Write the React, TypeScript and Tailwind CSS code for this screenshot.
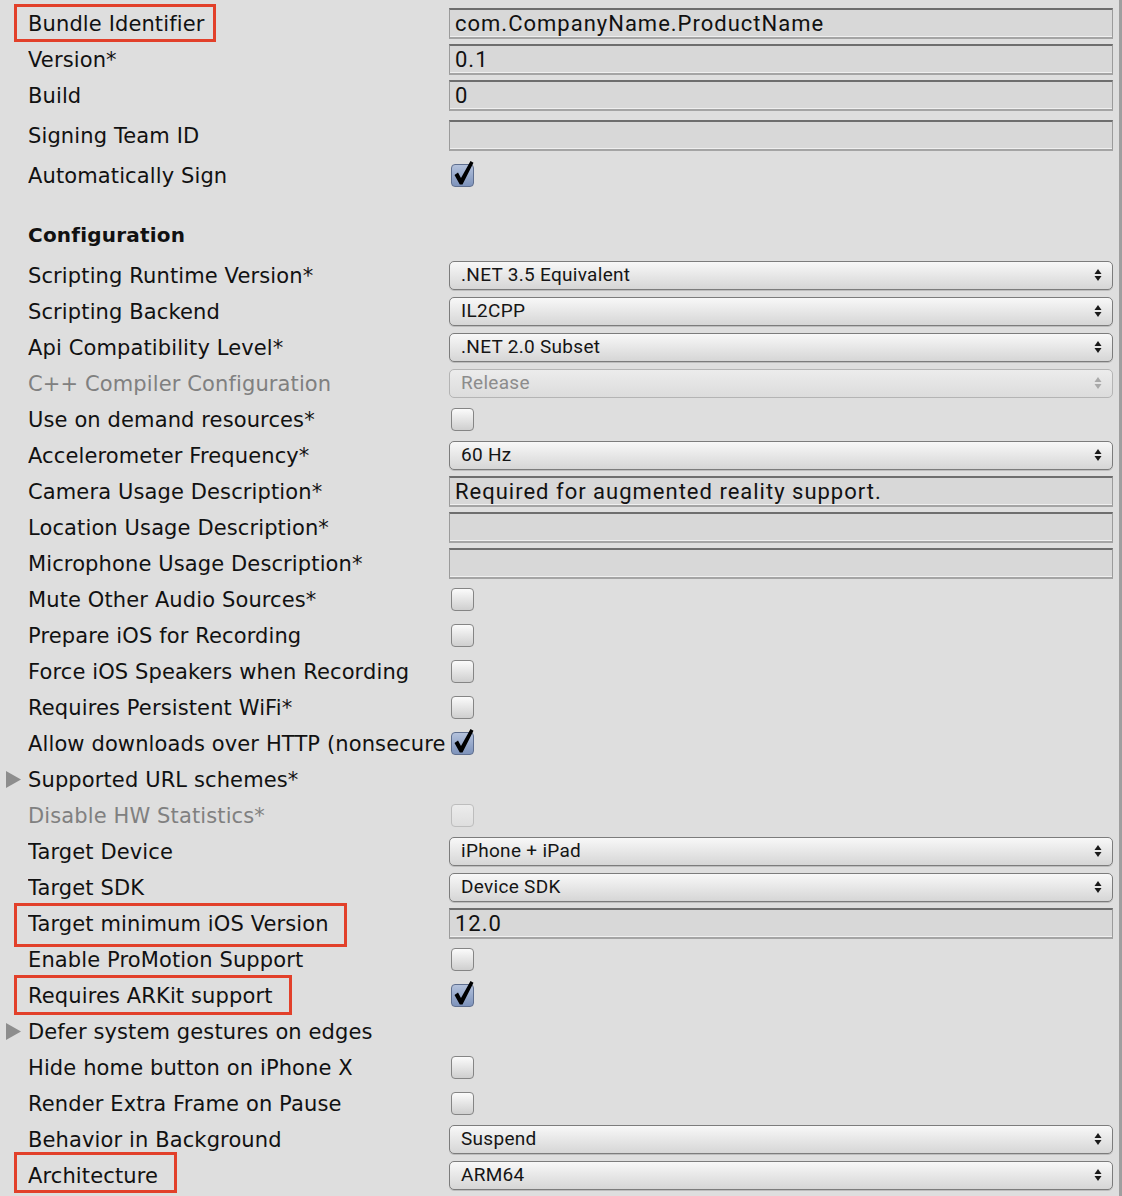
type Control =
  | { kind: "text"; value: string }
  | { kind: "select"; value: string; disabled?: boolean }
  | { kind: "check"; checked?: boolean; disabled?: boolean }
  | { kind: "none" };

interface Row {
  label: string;
  control: Control;
  dim?: boolean;
  foldout?: boolean;
  mark?: string; // classes for the red annotation box
}

const top: Row[] = [
  {
    label: "Bundle Identifier",
    control: { kind: "text", value: "com.CompanyName.ProductName" },
    mark: "top-[-1px] h-[38px] w-[202px]",
  },
  { label: "Version*", control: { kind: "text", value: "0.1" } },
  { label: "Build", control: { kind: "text", value: "0" } },
];

const signing: Row[] = [
  { label: "Signing Team ID", control: { kind: "text", value: "" } },
  { label: "Automatically Sign", control: { kind: "check", checked: true } },
];

const config: Row[] = [
  { label: "Scripting Runtime Version*", control: { kind: "select", value: ".NET 3.5 Equivalent" } },
  { label: "Scripting Backend", control: { kind: "select", value: "IL2CPP" } },
  { label: "Api Compatibility Level*", control: { kind: "select", value: ".NET 2.0 Subset" } },
  { label: "C++ Compiler Configuration", dim: true, control: { kind: "select", value: "Release", disabled: true } },
  { label: "Use on demand resources*", control: { kind: "check" } },
  { label: "Accelerometer Frequency*", control: { kind: "select", value: "60 Hz" } },
  { label: "Camera Usage Description*", control: { kind: "text", value: "Required for augmented reality support." } },
  { label: "Location Usage Description*", control: { kind: "text", value: "" } },
  { label: "Microphone Usage Description*", control: { kind: "text", value: "" } },
  { label: "Mute Other Audio Sources*", control: { kind: "check" } },
  { label: "Prepare iOS for Recording", control: { kind: "check" } },
  { label: "Force iOS Speakers when Recording", control: { kind: "check" } },
  { label: "Requires Persistent WiFi*", control: { kind: "check" } },
  { label: "Allow downloads over HTTP (nonsecure)", control: { kind: "check", checked: true } },
  { label: "Supported URL schemes*", foldout: true, control: { kind: "none" } },
  { label: "Disable HW Statistics*", dim: true, control: { kind: "check", disabled: true } },
  { label: "Target Device", control: { kind: "select", value: "iPhone + iPad" } },
  { label: "Target SDK", control: { kind: "select", value: "Device SDK" } },
  {
    label: "Target minimum iOS Version",
    control: { kind: "text", value: "12.0" },
    mark: "top-[-2px] h-[44px] w-[333px]",
  },
  { label: "Enable ProMotion Support", control: { kind: "check" } },
  {
    label: "Requires ARKit support",
    control: { kind: "check", checked: true },
    mark: "top-[-2px] h-[40px] w-[278px]",
  },
  { label: "Defer system gestures on edges", foldout: true, control: { kind: "none" } },
  { label: "Hide home button on iPhone X", control: { kind: "check" } },
  { label: "Render Extra Frame on Pause", control: { kind: "check" } },
  { label: "Behavior in Background", control: { kind: "select", value: "Suspend" } },
  {
    label: "Architecture",
    control: { kind: "select", value: "ARM64" },
    mark: "top-[-5px] h-[41px] w-[163px]",
  },
];

const labelFont = "font-['DejaVu_Sans',sans-serif]";
const fieldFont = "font-['Roboto','Open_Sans',sans-serif]";

function TextField({ value }: { value: string }) {
  return (
    <div
      className={`h-[31px] w-full flex items-center pl-[5px] bg-[#d8d8d8] border-t-2 border-t-[#6e6e6e] border-x border-x-[#9b9b9b] border-b-2 border-b-[#a4a4a4] shadow-[inset_0_-1px_0_#efefef] text-[22px] tracking-[1px] text-[#111] ${fieldFont}`}
    >
      {value}
    </div>
  );
}

function Arrows({ disabled }: { disabled?: boolean }) {
  const c = disabled ? "#a9a9a9" : "#1a1a1a";
  return (
    <svg width="8" height="14" viewBox="0 0 8 14">
      <path d="M4 1 L7.5 6 L0.5 6 Z" fill={c} />
      <path d="M4 13 L7.5 8 L0.5 8 Z" fill={c} />
    </svg>
  );
}

function Select({ value, disabled }: { value: string; disabled?: boolean }) {
  return (
    <div
      className={`h-[29px] w-full flex items-center justify-between pl-[11px] pr-[10px] rounded-[5px] border bg-linear-to-b text-[19px] tracking-[0.3px] ${fieldFont} ${
        disabled
          ? "border-[#b4b4b4] from-[#ececec] to-[#dcdcdc] text-[#8c8c8c]"
          : "border-[#7c7c7c] from-[#f8f8f8] to-[#d6d6d6] text-[#151515] shadow-[0_1px_0_#bdbdbd]"
      }`}
    >
      <span className="pt-[1px]">{value}</span>
      <Arrows disabled={disabled} />
    </div>
  );
}

function Checkbox({ checked, disabled }: { checked?: boolean; disabled?: boolean }) {
  return (
    <div className="relative ml-[2px] w-[23px] h-[23px]">
      <div
        className={`w-[23px] h-[23px] rounded-[4px] border bg-linear-to-b ${
          checked
            ? "border-[#5f6f8f] from-[#b4c2dc] to-[#7e93bb]"
            : disabled
              ? "border-[#bdbdbd] from-[#ececec] to-[#dedede]"
              : "border-[#858585] from-[#fbfbfb] to-[#cfcfcf]"
        }`}
      />
      {checked && (
        <svg className="absolute left-[2px] top-[-4px]" width="22" height="27" viewBox="0 0 22 27">
          <path d="M1.5 15 L5 12.5 L8 18 L17.5 1 L20.5 2.8 L9.5 24.5 L6.8 24.5 Z" fill="#000" />
        </svg>
      )}
    </div>
  );
}

function Foldout() {
  return (
    <svg width="15" height="17" viewBox="0 0 15 17">
      <path d="M0 0 L15 8.5 L0 17 Z" fill="#8d8d8d" />
    </svg>
  );
}

function SettingRow({ row }: { row: Row }) {
  const c = row.control;
  return (
    <div className="flex h-[36px] items-center">
      <div className="relative w-[449px] shrink-0 h-full flex items-center pl-[6px]">
        {row.mark && (
          <div className={`absolute left-[14px] border-[3px] border-[#e2402a] ${row.mark}`} />
        )}
        <div className="w-[22px] shrink-0 flex items-center">{row.foldout && <Foldout />}</div>
        <span
          className={`relative block w-[418px] pt-[4px] overflow-hidden whitespace-nowrap text-[21px] tracking-[0.12px] ${labelFont} ${
            row.dim ? "text-[#808080]" : "text-[#111]"
          }`}
        >
          {row.label}
        </span>
      </div>
      <div className="w-[664px] shrink-0 flex items-center">
        {c.kind === "text" && <TextField value={c.value} />}
        {c.kind === "select" && <Select value={c.value} disabled={c.disabled} />}
        {c.kind === "check" && <Checkbox checked={c.checked} disabled={c.disabled} />}
      </div>
    </div>
  );
}

export default function App() {
  return (
    <div className="w-[1122px] min-h-[1196px] bg-[#dedede] border-r-[3px] border-r-[#9f9f9f] pt-[5px]">
      {top.map((r) => (
        <SettingRow key={r.label} row={r} />
      ))}
      <div className="mt-[4px] flex flex-col gap-[4px]">
        {signing.map((r) => (
          <SettingRow key={r.label} row={r} />
        ))}
      </div>
      <div className="mt-[24px] h-[36px] flex items-center pl-[28px]">
        <span className={`text-[20px] font-bold tracking-[0.2px] text-[#111] ${labelFont}`}>Configuration</span>
      </div>
      <div className="mt-[4px]">
        {config.map((r) => (
          <SettingRow key={r.label} row={r} />
        ))}
      </div>
    </div>
  );
}
